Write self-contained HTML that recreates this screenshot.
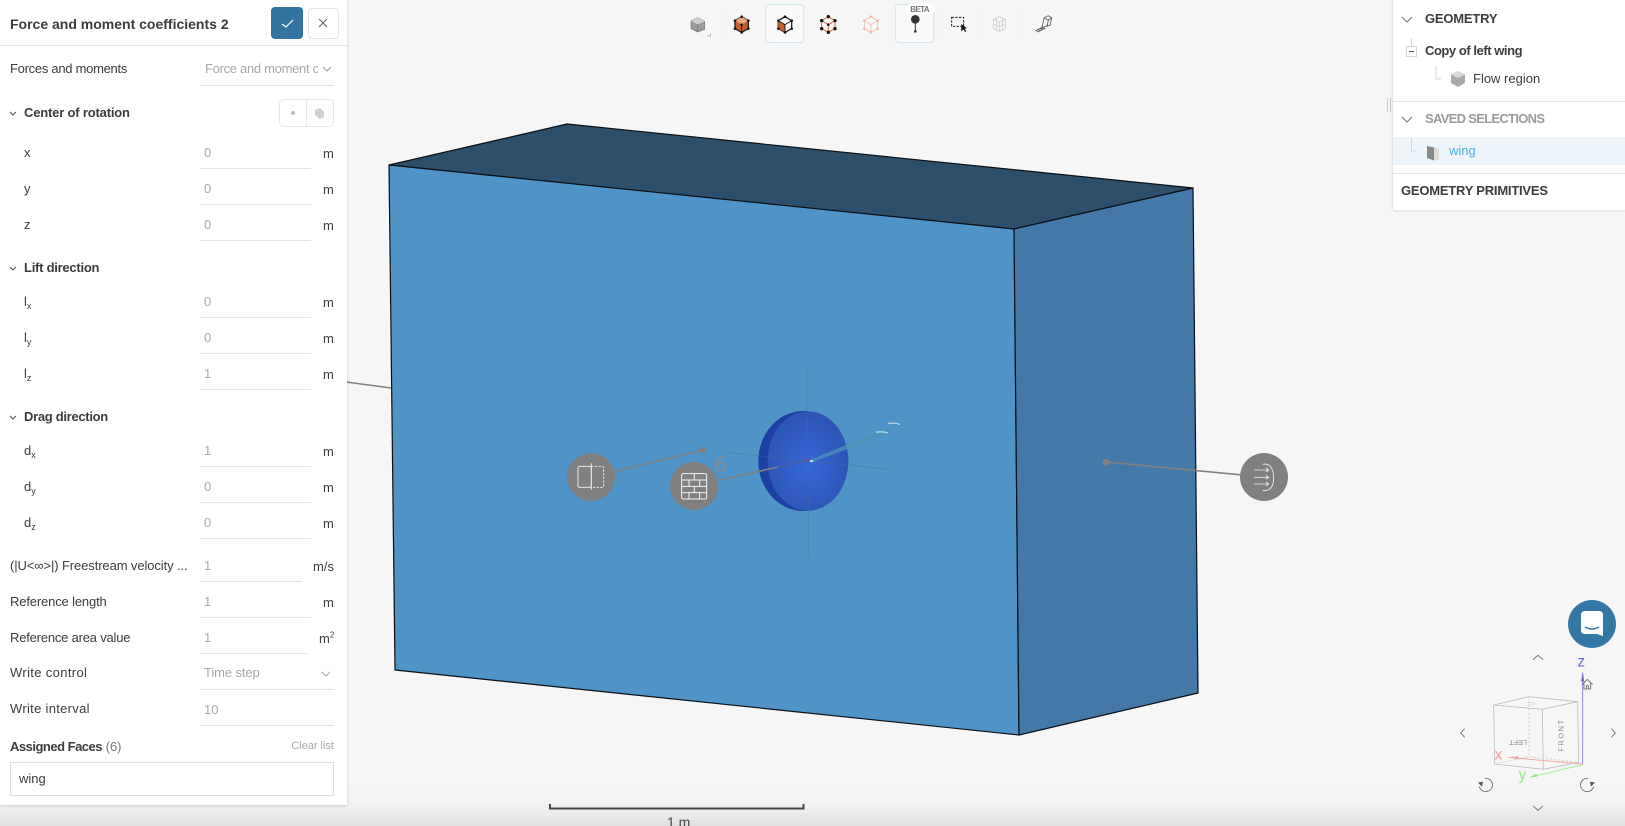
<!DOCTYPE html>
<html><head><meta charset="utf-8"><style>
*{box-sizing:border-box}
html,body{margin:0;padding:0;width:1625px;height:826px;overflow:hidden;background:#f6f6f6;font-family:"Liberation Sans",sans-serif;color:#3c3c3c}
.t{position:absolute;white-space:nowrap;font-size:13px;line-height:16px;transform:translateY(-8px)}
.b{font-weight:bold}
.g{color:#a8a8a8}
.l{position:absolute;height:1px;background:#e3e3e3}
sub{font-size:9px;line-height:0;vertical-align:-3px}
sup{font-size:8px;line-height:0}
#panel{position:absolute;left:0;top:0;width:347px;height:805px;background:#fff;box-shadow:0 1px 3px rgba(0,0,0,.18)}
#tree{position:absolute;left:1393px;top:0;width:232px;height:210px;background:#fff;box-shadow:0 0 3px rgba(0,0,0,.18)}
svg{position:absolute;left:0;top:0}
</style></head><body>
<div style="position:absolute;left:0;top:785px;width:1625px;height:41px;background:linear-gradient(#f6f6f6,#f2f2f2 50%,#e0e0e0)"></div>
<svg width="1625" height="826" viewBox="0 0 1625 826">
<polygon points="389,165 567,124 1193,188 1014,229" fill="#2c506b" stroke="#0a0f14" stroke-width="1.2" stroke-linejoin="round"/>
<polygon points="389,165 1014,229 1019,735 395,670" fill="#5093c6" stroke="#0a0f14" stroke-width="1.2" stroke-linejoin="round"/>
<polygon points="1014,229 1193,188 1198,693 1019,735" fill="#4378a7" stroke="#0a0f14" stroke-width="1.2" stroke-linejoin="round"/>
<line x1="346" y1="382" x2="391" y2="388" stroke="#808080" stroke-width="1.5"/>
<defs><radialGradient id="sg" cx=".5" cy=".55" r=".6"><stop offset="0" stop-color="#3767d8"/><stop offset="1" stop-color="#2c52b2"/></radialGradient></defs>
<g transform="translate(550 380) scale(.3333)">
<ellipse cx="760" cy="243" rx="135" ry="150" fill="#1e3fa4"/>
<ellipse cx="774" cy="243" rx="121" ry="149" fill="url(#sg)"/>
<line x1="770" y1="-45" x2="777" y2="540" stroke="#4a6f92" stroke-width="2" stroke-opacity=".55"/>
<line x1="528" y1="217" x2="1020" y2="268" stroke="#4a6f92" stroke-width="2" stroke-opacity=".55"/>
<polygon points="780,240 985,155 1045,132 1005,165 785,247" fill="#4f93b9" fill-opacity=".75"/>
<path d="M978 157q18-4 36 2M1014 131q18-4 36 2" stroke="#b9d7ea" stroke-width="4" fill="none"/>
<line x1="690" y1="260" x2="770" y2="240" stroke="#5c5f8e" stroke-width="3" stroke-opacity=".7"/>
<circle cx="770" cy="240" r="8" fill="#6b4d93" fill-opacity=".6"/>
<path d="M778 246h14l-8-8z" fill="#cfe2f3"/>
<text x="494" y="276" font-size="66" fill="#808c9a" font-family="Liberation Sans">6</text>
</g>
<line x1="591" y1="477" x2="703" y2="450" stroke="#808080" stroke-width="1.6"/><circle cx="703" cy="450" r="3.3" fill="#808080"/>
<line x1="694" y1="486" x2="778" y2="467" stroke="#808080" stroke-width="1.6"/>
<line x1="1106" y1="462" x2="1264" y2="477" stroke="#808080" stroke-width="1.6"/><circle cx="1106" cy="462" r="3.3" fill="#808080"/>
<circle cx="591" cy="477" r="24" fill="#808080"/>
<circle cx="694" cy="486" r="24" fill="#808080"/>
<circle cx="1264" cy="477" r="24" fill="#808080"/>
<g transform="translate(550 380) scale(.3333)" fill="none" stroke="#e8e8e8" stroke-width="3">
<rect x="84" y="259" width="40" height="63" rx="5"/><path d="M124 259h32q5 0 5 5v53q0 5-5 5h-32" stroke-dasharray="7 4"/><line x1="124" y1="250" x2="124" y2="330"/>
<rect x="395" y="281" width="75" height="76" rx="5" stroke="#f4f4f4"/>
<path stroke="#f4f4f4" d="M395 300h75M395 319h75M395 338h75M433 281v19M417 300v19M449 300v19M433 319v19M417 338v19M449 338v19"/>
</g>
<g transform="translate(1080 430) scale(.3333)" fill="none" stroke="#f0f0f0" stroke-width="2.5">
<path d="M522 120h44M522 142h44M522 162h44M558 114l8 6-8 6M558 136l8 6-8 6M558 156l8 6-8 6"/>
<path d="M548 103c30-6 34 30 32 40 2 14-4 44-32 38"/>
</g>
<!-- toolbar -->
<g transform="translate(680 0) scale(.3333)">
<path d="M125 20v90M775 20v90M895 20v90M1015 20v90" stroke="#f0f0f0" stroke-width="2"/>
<rect x="257" y="14" width="114" height="114" rx="9" fill="#fafafa" stroke="#cfe3f0" stroke-width="3"/>
<rect x="647" y="14" width="114" height="114" rx="9" fill="#fafafa" stroke="#cfe3f0" stroke-width="3"/>
<path d="M53 53l21 11v24l-21 8-20-10V63z" fill="#9a9a9a" stroke="#777" stroke-width="2"/><path d="M33 63l20 10 21-9-21-11z" fill="#d0d0d0"/><path d="M53 73v23" stroke="#777" stroke-width="2"/>
<path d="M92 100v8H81" fill="none" stroke="#999" stroke-width="2"/>
<path d="M185 50l20 12v24l-20 11-20-11V62z" fill="#c55f2f" stroke="#222" stroke-width="4"/><path d="M165 62l20 12 20-12-20-12z" fill="#e8a47d"/><path d="M185 74v23" stroke="#222" stroke-width="3"/>
<g fill="#111"><circle cx="185" cy="50" r="4"/><circle cx="165" cy="62" r="4"/><circle cx="205" cy="62" r="4"/><circle cx="165" cy="86" r="4"/><circle cx="205" cy="86" r="4"/><circle cx="185" cy="97" r="4"/><circle cx="185" cy="74" r="4"/></g>
<path d="M315 50l20 12v24l-20 11-20-11V62z" fill="#fff" stroke="#222" stroke-width="4"/><path d="M295 62l20 12v23l-20-11z" fill="#c55f2f"/><path d="M295 62l20 12 20-12M315 74v23" fill="none" stroke="#222" stroke-width="3"/>
<g fill="#111"><circle cx="315" cy="50" r="4"/><circle cx="295" cy="62" r="4"/><circle cx="335" cy="62" r="4"/><circle cx="295" cy="86" r="4"/><circle cx="335" cy="86" r="4"/><circle cx="315" cy="97" r="4"/></g>
<path d="M445 50l20 12v24l-20 11-20-11V62zM425 62l20 12 20-12M445 74v23" fill="none" stroke="#c9703f" stroke-width="3"/>
<g fill="#111"><circle cx="445" cy="50" r="5"/><circle cx="425" cy="62" r="5"/><circle cx="465" cy="62" r="5"/><circle cx="425" cy="86" r="5"/><circle cx="465" cy="86" r="5"/><circle cx="445" cy="97" r="5"/><circle cx="445" cy="74" r="4"/></g>
<path d="M573 50l20 12v24l-20 11-20-11V62zM553 62l20 12 20-12M573 74v23" fill="none" stroke="#e6b6a0" stroke-width="2"/>
<g fill="#eeb9a3"><circle cx="573" cy="50" r="4"/><circle cx="553" cy="62" r="4"/><circle cx="593" cy="62" r="4"/><circle cx="553" cy="86" r="4"/><circle cx="593" cy="86" r="4"/><circle cx="573" cy="97" r="4"/></g>
<rect x="677" y="12" width="87" height="31" rx="15" fill="#fff"/>
<text x="691" y="36" font-size="24" font-weight="bold" fill="#777" font-family="Liberation Sans" textLength="58">BETA</text>
<circle cx="706" cy="58" r="13" fill="#333"/><line x1="706" y1="70" x2="706" y2="94" stroke="#333" stroke-width="3"/><circle cx="706" cy="94" r="4" fill="#333"/>
<rect x="815" y="52" width="36" height="27" fill="none" stroke="#222" stroke-width="3" stroke-dasharray="7 4"/>
<path d="M844 72l0 22 6-6 6 8 3-2-5-8 7-1z" fill="#111"/>
<g fill="none" stroke="#c4c4c4" stroke-width="2"><path d="M958 50l18 8v28l-18 8-18-8V58zM940 58l18 8 18-8M958 66v28M940 72l18 8 18-8M949 54v36M967 54v36"/></g>
<g fill="none" stroke="#555" stroke-width="2.5"><path d="M1085 85l8-32 12-6 10 6-4 22-16 4zM1093 53l12 8 10-8M1105 61l-4 20"/><path d="M1066 93l24-12M1072 96l24-12" stroke-width="3"/></g>
</g>
<!-- scale -->
<path d="M550 804v4.500H803.500V804" stroke="#444" stroke-width="2" fill="none"/>
<text x="667" y="827" font-size="14" fill="#444">1 m</text>
<!-- nav cube -->
<g transform="translate(1430 590) scale(.3333)">
<g fill="none" stroke="#bcbcbc" stroke-width="2.500">
<path d="M191 345l106-25 146 15-106 23zM191 345l3 177 146 16-3-180M443 335l3 182-106 21"/>
<path d="M297 320v180M194 522l103-22 149 17" stroke-dasharray="7 5" stroke="#d0d0d0"/>
</g>
<g font-family="Liberation Sans" fill="#888" font-size="22">
<text transform="translate(291 441) rotate(180)" x="0" y="-9">LEFT</text>
<text transform="translate(400 485) rotate(-90)" x="0" y="0" textLength="95">FRONT</text>
<text x="291" y="346" font-size="13" fill="#c8c8c8">TOP</text>
</g>
<line x1="458" y1="522" x2="458" y2="250" stroke="#8b8bf0" stroke-width="3"/><path d="M458 245l-5 30h10z" fill="#6a6ac8"/>
<line x1="458" y1="524" x2="300" y2="562" stroke="#a3ee8e" stroke-width="3"/><path d="M298 562l22-11 2 9z" fill="#8fe57a"/>
<line x1="458" y1="522" x2="235" y2="502" stroke="#f2a5a5" stroke-width="3"/><path d="M235 502l30-4v10z" fill="#eeaaaa"/>
<g font-family="Liberation Sans" font-size="46"><text x="442" y="230" fill="#6a6ae8">z</text><text x="194" y="508" fill="#f2a0a0">x</text><text x="266" y="568" fill="#98ec80">y</text></g>
<path d="M456 284l16-16 16 16M462 280v17h20v-17M469 297v-10h6v10" fill="none" stroke="#666" stroke-width="2.500"/>
<g fill="none" stroke="#666" stroke-width="2.500"><path d="M309 209l15-13 15 13M309 648l15 13 15-13M104 416l-12 13 12 13M544 416l12 13-12 13"/>
<path d="M165 565A20 20 0 1 1 148 590"/><path d="M474 565A20 20 0 1 0 491 590"/></g>
<path d="M144 578l15-3-3 15zM495 578l-15-3 3 15z" fill="#555"/>
</g>
<circle cx="1592" cy="624" r="24" fill="#3277a5"/>
<path d="M1581 615q0-4 4-4h14q4 0 4 4v21l-6-2h-12q-4 0-4-4z" fill="#fff"/>
<path d="M1585 627q7 4 14 0" fill="none" stroke="#3277a5" stroke-width="1.500"/>
<path d="M1387.500 98v14M1390.500 98v14" stroke="#c8c8c8" stroke-width="1"/>
</svg>

<div id="panel">
<div class="l" style="left:0;right:0;top:45px"></div>
<div class="t b" style="left:10px;top:24px;font-size:14px">Force and moment coefficients 2</div>
<div style="position:absolute;left:271px;top:7px;width:32px;height:32px;background:#32749f;border-radius:4px"></div>
<div style="position:absolute;left:308px;top:8px;width:31px;height:31px;border:1px solid #e3e3e3;border-radius:4px"></div>
<svg width="347" height="130" style="pointer-events:none">
<path d="M282 24l4 3 7-7" fill="none" stroke="#fff" stroke-width="1.200"/>
<path d="M319 19l8 8M327 19l-8 8" stroke="#666" stroke-width="1.100"/>
<rect x="279.500" y="99.500" width="54" height="27" rx="4" fill="#fff" stroke="#e8e8e8"/><line x1="306.500" y1="100" x2="306.500" y2="126" stroke="#e8e8e8"/>
<circle cx="293" cy="113" r="2" fill="#bbb"/><path d="M315 110l5-2 4 4 0 5-4 2-5-4z" fill="#d0d0d0"/>
<path d="M323 67l4 4 4-4" fill="none" stroke="#999" stroke-width="1"/>
</svg>
<div class="t" style="left:10px;top:69px;letter-spacing:-.28px">Forces and moments</div>
<div class="t g" style="left:205px;top:69px;width:113px;overflow:hidden;letter-spacing:-.3px">Force and moment c</div>
<div class="l" style="left:200px;width:134px;top:85px"></div>

<svg width="20" height="600"><path d="M10 112l3 3 3-3M10 267l3 3 3-3M10 416l3 3 3-3" fill="none" stroke="#555" stroke-width="1.100"/></svg>

<div class="t b" style="left:24px;top:113px;letter-spacing:-.18px">Center of rotation</div>
<div class="t" style="left:24px;top:153px">x</div><div class="t g" style="left:204px;top:153px">0</div><div class="t" style="left:323px;top:154px">m</div><div class="l" style="left:200px;width:111px;top:168px"></div>
<div class="t" style="left:24px;top:189px">y</div><div class="t g" style="left:204px;top:189px">0</div><div class="t" style="left:323px;top:190px">m</div><div class="l" style="left:200px;width:111px;top:204px"></div>
<div class="t" style="left:24px;top:225px">z</div><div class="t g" style="left:204px;top:225px">0</div><div class="t" style="left:323px;top:226px">m</div><div class="l" style="left:200px;width:111px;top:240px"></div>

<div class="t b" style="left:24px;top:268px;letter-spacing:-.25px">Lift direction</div>
<div class="t" style="left:24px;top:302px">l<sub>x</sub></div><div class="t g" style="left:204px;top:302px">0</div><div class="t" style="left:323px;top:303px">m</div><div class="l" style="left:200px;width:111px;top:317px"></div>
<div class="t" style="left:24px;top:338px">l<sub>y</sub></div><div class="t g" style="left:204px;top:338px">0</div><div class="t" style="left:323px;top:339px">m</div><div class="l" style="left:200px;width:111px;top:353px"></div>
<div class="t" style="left:24px;top:374px">l<sub>z</sub></div><div class="t g" style="left:204px;top:374px">1</div><div class="t" style="left:323px;top:375px">m</div><div class="l" style="left:200px;width:111px;top:389px"></div>

<div class="t b" style="left:24px;top:417px;letter-spacing:-.3px">Drag direction</div>
<div class="t" style="left:24px;top:451px">d<sub>x</sub></div><div class="t g" style="left:204px;top:451px">1</div><div class="t" style="left:323px;top:452px">m</div><div class="l" style="left:200px;width:111px;top:466px"></div>
<div class="t" style="left:24px;top:487px">d<sub>y</sub></div><div class="t g" style="left:204px;top:487px">0</div><div class="t" style="left:323px;top:488px">m</div><div class="l" style="left:200px;width:111px;top:502px"></div>
<div class="t" style="left:24px;top:523px">d<sub>z</sub></div><div class="t g" style="left:204px;top:523px">0</div><div class="t" style="left:323px;top:524px">m</div><div class="l" style="left:200px;width:111px;top:538px"></div>

<div class="t" style="left:10px;top:566px;letter-spacing:-.1px">(|U&lt;∞&gt;|) Freestream velocity ...</div><div class="t g" style="left:204px;top:566px">1</div><div class="t" style="left:313px;top:567px">m/s</div><div class="l" style="left:200px;width:102px;top:581px"></div>
<div class="t" style="left:10px;top:602px;letter-spacing:-.15px">Reference length</div><div class="t g" style="left:204px;top:602px">1</div><div class="t" style="left:323px;top:603px">m</div><div class="l" style="left:200px;width:111px;top:617px"></div>
<div class="t" style="left:10px;top:638px;letter-spacing:-.2px">Reference area value</div><div class="t g" style="left:204px;top:638px">1</div><div class="t" style="left:319px;top:639px">m<sup>2</sup></div><div class="l" style="left:200px;width:107px;top:653px"></div>
<div class="t" style="left:10px;top:673px;letter-spacing:.35px">Write control</div><div class="t g" style="left:204px;top:673px;letter-spacing:-.1px">Time step</div><div class="l" style="left:200px;width:134px;top:689px"></div>
<svg width="347" height="700" style="pointer-events:none"><path d="M322 672l4 4 4-4" fill="none" stroke="#aaa" stroke-width="1"/></svg>
<div class="t" style="left:10px;top:709px;letter-spacing:.3px">Write interval</div><div class="t g" style="left:204px;top:710px">10</div><div class="l" style="left:200px;width:134px;top:725px"></div>
<div class="t" style="left:10px;top:747px"><b style="letter-spacing:-.5px">Assigned Faces</b> <span style="color:#777">(6)</span></div>
<div class="t g" style="right:13px;top:746px;font-size:11px">Clear list</div>
<div style="position:absolute;left:10px;top:762px;width:324px;height:34px;border:1px solid #dfdfdf"></div>
<div class="t" style="left:19px;top:779px">wing</div>
</div>

<div id="tree">
<div style="position:absolute;left:0;right:0;top:137px;height:28px;background:#edf5fb"></div>
<div class="l" style="left:0;right:0;top:101px"></div>
<div class="l" style="left:0;right:0;top:173px"></div>
<svg width="232" height="210">
<path d="M9 17l5 5 5-5M9 117l5 5 5-5" fill="none" stroke="#777" stroke-width="1.100"/>
<path d="M18.500 38v8M43 66v13h5M18.500 138v13h5" fill="none" stroke="#d5d5d5"/>
<rect x="13.500" y="46.500" width="10" height="10" fill="#fff" stroke="#d5d5d5"/><path d="M16 51.500h5" stroke="#555"/>
<path d="M65 71l7 3.500v8.500l-7 4-7-4v-8.500z" fill="#aaa"/><path d="M58 74.500l7-3.500 7 3.500-7 3.500z" fill="#d8d8d8"/>
<path d="M34 146l7 1.500v13l-7-2.500z" fill="#888"/><path d="M41 147.500l5 1v11l-5 1z" fill="#ddd"/>
</svg>
<div class="t b" style="left:32px;top:19px;letter-spacing:-.2px">GEOMETRY</div>
<div class="t b" style="left:32px;top:51px;letter-spacing:-.45px">Copy of left wing</div>
<div class="t" style="left:80px;top:79px">Flow region</div>
<div class="t b" style="left:32px;top:119px;color:#9b9b9b;letter-spacing:-.7px">SAVED SELECTIONS</div>
<div class="t" style="left:56px;top:151px;color:#4fb0e0">wing</div>
<div class="t b" style="left:8px;top:191px;letter-spacing:-.22px">GEOMETRY PRIMITIVES</div>
</div>
</body></html>
